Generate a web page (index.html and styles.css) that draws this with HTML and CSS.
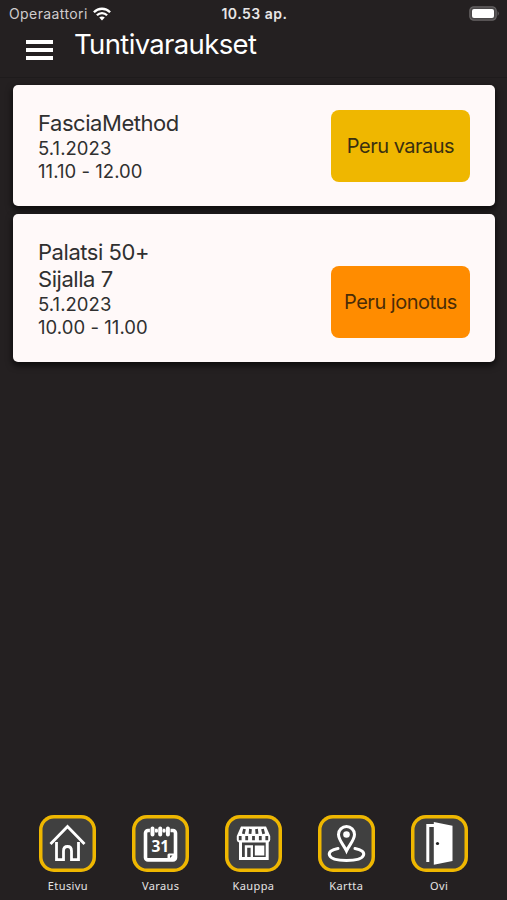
FILE: index.html
```html
<!DOCTYPE html>
<html lang="fi">
<head>
    <meta charset="UTF-8">
    <meta name="viewport" content="width=device-width, initial-scale=1.0">
    <title>Tuntivaraukset</title>
    <link rel="stylesheet" href="styles.css">
</head>
<body>
    <div class="status-bar">
        <div class="carrier">
            <span class="carrier-name">Operaattori</span>
            <svg class="wifi" viewBox="0 0 18 14" width="18" height="14">
                <g fill="none" stroke="#fff" stroke-width="2.3">
                    <path d="M0.9 5.2C5.4 0.6 12.6 0.6 17.1 5.2"/>
                    <path d="M3.9 8.3C6.7 5.4 11.3 5.4 14.1 8.3"/>
                </g>
                <path d="M6.2 10.6C7.8 9 10.2 9 11.8 10.6L9 13.6Z" fill="#fff"/>
            </svg>
        </div>
        <span class="clock">10.53 ap.</span>
        <svg class="battery" viewBox="0 0 31 15" width="31" height="15">
            <rect x="0.8" y="0.8" width="26.4" height="13.4" rx="4" fill="#4a4748" stroke="#656263" stroke-width="1.2"/>
            <rect x="3" y="3" width="22" height="9" rx="2" fill="#fff"/>
            <path d="M28.6 5Q31 7.5 28.6 10Z" fill="#656263"/>
        </svg>
    </div>

    <header class="header">
        <button class="menu-btn" aria-label="Valikko">
            <span></span>
            <span></span>
            <span></span>
        </button>
        <h1>Tuntivaraukset</h1>
    </header>

    <main class="bookings">
        <div class="card">
            <div class="info">
                <h2>FasciaMethod</h2>
                <p>5.1.2023</p>
                <p>11.10 - 12.00</p>
            </div>
            <button class="cancel-btn">Peru varaus</button>
        </div>
        <div class="card">
            <div class="info">
                <h2>Palatsi 50+</h2>
                <h2>Sijalla 7</h2>
                <p>5.1.2023</p>
                <p>10.00 - 11.00</p>
            </div>
            <button class="cancel-btn queue">Peru jonotus</button>
        </div>
    </main>

    <nav class="bottom-nav">
        <a class="nav-item">
            <svg class="nav-icon" viewBox="0 0 57 57">
                <g fill="none" stroke="#fff" stroke-width="2.8">
                    <path d="M11.5 29L28.5 11.5L45.5 29"/>
                    <path d="M17.5 27V44.6H24.5V36Q24.5 31.5 28.5 31.5Q32.5 31.5 32.5 36V44.6H39.5V27"/>
                </g>
            </svg>
            <span>Etusivu</span>
        </a>
        <a class="nav-item">
            <svg class="nav-icon" viewBox="0 0 57 57">
                <rect x="13.5" y="15.5" width="30" height="29.4" rx="2.5" fill="none" stroke="#fff" stroke-width="3.6"/>
                <path d="M35.5 45V40Q35.5 38.5 37 38.5H44V45Z" fill="#fff"/>
                <path d="M38 43V40.5H40.5Z" fill="#404040"/>
                <g fill="none" stroke-linecap="round">
                    <path d="M20.5 14V19.5M28.2 14V19.5M35.9 14V19.5" stroke="#404040" stroke-width="5.2"/>
                    <path d="M20.5 13.5V19.5M28.2 13.5V19.5M35.9 13.5V19.5" stroke="#fff" stroke-width="4"/>
                    <path d="M24.4 15.5V16M32 15.5V16" stroke="#fff" stroke-width="3"/>
                </g>
                <text class="calendar-day" x="28.3" y="36.5" text-anchor="middle">31</text>
            </svg>
            <span>Varaus</span>
        </a>
        <a class="nav-item">
            <svg class="nav-icon" viewBox="0 0 57 57">
                <path d="M16 11.5H41L45.2 21V24.5Q45 27.5 42.2 27.5H14.8Q12 27.5 11.8 24.5V21Z" fill="#fff"/>
                <g stroke="#404040" stroke-width="2.8">
                    <path d="M19.5 14L18.3 18.8M25.5 14L25 18.8M31.5 14L32 18.8M37.5 14L38.7 18.8"/>
                    <path d="M15.2 21V25.2M21.7 21V25.2M28.5 21V25.2M35.3 21V25.2M41.8 21V25.2"/>
                </g>
                <path d="M15.5 26V43.6H42.2V26" fill="none" stroke="#fff" stroke-width="3"/>
                <path d="M21 43.5V31.5H26.8V43.5" fill="none" stroke="#fff" stroke-width="2.4"/>
                <rect x="29.8" y="30.5" width="9.5" height="10" fill="#fff"/>
            </svg>
            <span>Kauppa</span>
        </a>
        <a class="nav-item">
            <svg class="nav-icon" viewBox="0 0 57 57">
                <g fill="none" stroke="#fff" stroke-width="3" stroke-linecap="round">
                    <path d="M28.5 36C26 30.5 20.5 25 20.5 19.5A8 8 0 0 1 36.5 19.5C36.5 25 31 30.5 28.5 36Z"/>
                    <path d="M20 33.5C7 35.5 7.5 45.5 28.5 45.5S50 35.5 37 33.5"/>
                </g>
                <circle cx="28.5" cy="19.5" r="3.3" fill="#fff"/>
            </svg>
            <span>Kartta</span>
        </a>
        <a class="nav-item">
            <svg class="nav-icon" viewBox="0 0 57 57">
                <path d="M16.8 47V10.5H23" fill="none" stroke="#fff" stroke-width="3"/>
                <path d="M22.8 7L41.5 10.8V46L22.8 49.8Z" fill="#fff"/>
                <circle cx="26.5" cy="28.5" r="1.6" fill="#222"/>
            </svg>
            <span>Ovi</span>
        </a>
    </nav>
</body>
</html>
```

FILE: styles.css
```css
* {
    box-sizing: border-box;
}

body {
    background: #242021;
    margin: 0;
    height: 100vh;
    overflow: hidden;
    font-family: Inter, "Liberation Sans", sans-serif;
    display: flex;
    flex-direction: column;
}

h1, h2, p {
    margin: 0;
    font-weight: 400;
}

button {
    font-family: inherit;
    border: none;
    padding: 0;
    cursor: pointer;
}

.status-bar {
    display: grid;
    grid-template-columns: 1fr auto 1fr;
    align-items: center;
    height: 27px;
    padding: 0 7px 0 9px;
    color: #e8e6e6;
}

.carrier {
    display: flex;
    align-items: center;
    gap: 5px;
    font-size: 14px;
}

.carrier-name {
    color: #cfcccd;
    letter-spacing: 0.4px;
}

.clock {
    font-size: 14px;
    font-weight: 600;
    letter-spacing: 0.5px;
}

.battery {
    justify-self: end;
}

.header {
    display: flex;
    align-items: flex-start;
    height: 51px;
    padding-left: 26px;
    border-bottom: 1px solid #1e1b1c;
}

.menu-btn {
    display: flex;
    flex-direction: column;
    gap: 4px;
    width: 27px;
    margin-top: 13px;
    background: none;
}

.menu-btn span {
    display: block;
    width: 100%;
    height: 4px;
    background: #fff;
}

.header h1 {
    margin-left: 21px;
    color: #fff;
    font-size: 27.5px;
    line-height: 34px;
    letter-spacing: -0.65px;
}

.bookings {
    display: flex;
    flex-direction: column;
    gap: 8px;
    flex: 1;
    padding: 7px 12px 0 13px;
}

.card {
    display: flex;
    justify-content: space-between;
    align-items: flex-end;
    padding: 25px 25px 24px;
    background: #fff9f9;
    border-radius: 5px;
    box-shadow: 0 3px 6px 1px rgba(0, 0, 0, 0.6);
}

.info {
    align-self: flex-start;
    color: #303030;
}

.info h2 {
    font-size: 22px;
    line-height: 27.2px;
    letter-spacing: -0.45px;
}

.info p {
    font-size: 18.5px;
    line-height: 22.3px;
    letter-spacing: 0.05px;
}

.cancel-btn {
    width: 139px;
    height: 72px;
    border-radius: 8px;
    background: #efb700;
    color: #3a3010;
    font-size: 20px;
    letter-spacing: -0.5px;
}

.queue {
    background: #ff8c00;
    color: #4a2c08;
}

.bottom-nav {
    display: grid;
    grid-template-columns: repeat(5, 92.8px);
    justify-content: center;
    height: 85px;
}

.nav-item {
    display: flex;
    flex-direction: column;
    align-items: center;
    gap: 6px;
    color: #e6e4e4;
    font-family: "Noto Sans", sans-serif;
    font-size: 11px;
    line-height: 15px;
    letter-spacing: 0.4px;
}

.nav-icon {
    width: 57px;
    height: 57px;
    background: #404040;
    border-radius: 15px;
    box-shadow: inset 0 0 0 3.5px #efb700;
}

.calendar-day {
    font-family: "Noto Sans", sans-serif;
    font-size: 15.5px;
    font-weight: 700;
    letter-spacing: 0;
    fill: #fff;
}
```
